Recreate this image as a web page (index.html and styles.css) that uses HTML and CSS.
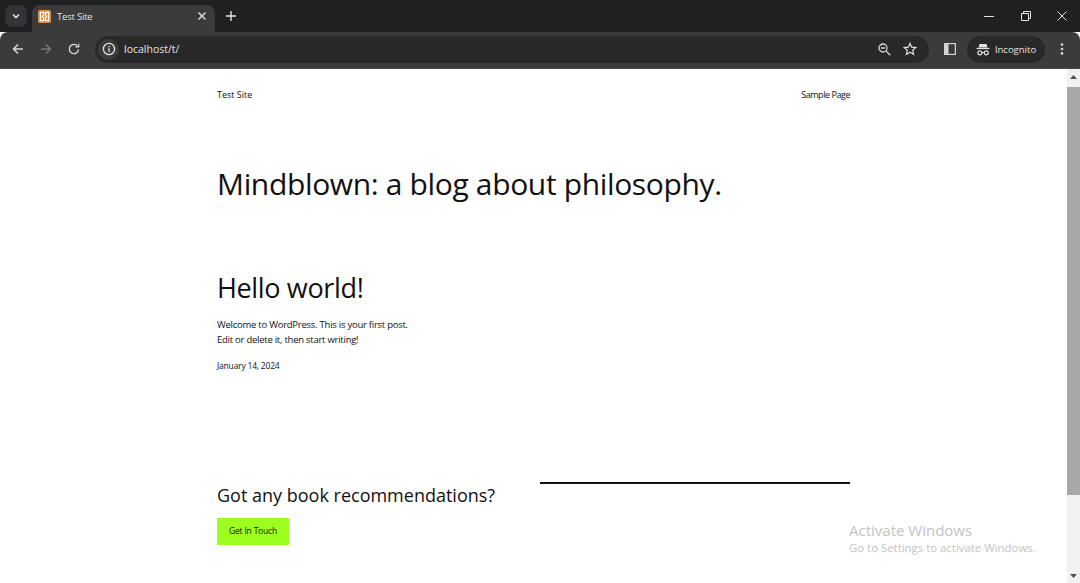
FILE: index.html
```html
<!DOCTYPE html>
<html lang="en">
<head>
    <meta charset="UTF-8">
    <meta name="viewport" content="width=device-width, initial-scale=1.0">
    <title>Test Site</title>
    <link rel="stylesheet" href="styles.css">
</head>
<body>
    <div class="tabstrip">
        <div class="tabSearch">
            <svg width="10" height="10" viewBox="0 0 10 10"><path d="M2 3.5 5 6.5 8 3.5" fill="none" stroke="#e3e3e3" stroke-width="1.6"/></svg>
        </div>
        <div class="tab">
            <svg class="favicon" width="13" height="13" viewBox="0 0 14 14">
                <rect width="14" height="14" rx="2" fill="#e08a3c"/>
                <path d="M2.6 2.6h3.4v2.6L4.8 7 6 8.8v2.6H2.6zM11.4 2.6H8v2.6L9.2 7 8 8.8v2.6h3.4z" fill="none" stroke="#fff" stroke-width="1.4"/>
            </svg>
            <span class="tabTitle">Test Site</span>
            <svg class="tabClose" width="10" height="10" viewBox="0 0 10 10"><path d="M1.5 1.5 8.5 8.5M8.5 1.5 1.5 8.5" stroke="#e3e3e3" stroke-width="1.4"/></svg>
        </div>
        <svg class="newTab" width="10" height="10" viewBox="0 0 10 10"><path d="M5 0V10M0 5H10" stroke="#e3e3e3" stroke-width="1.4"/></svg>
        <div class="windowBtns">
            <svg width="10" height="10" viewBox="0 0 10 10"><path d="M0 5.5H10" stroke="#e3e3e3" stroke-width="1"/></svg>
            <svg width="10" height="10" viewBox="0 0 10 10"><path d="M.5 2.5h7v7h-7zM2.5 2.5V.5h7v7h-2" fill="none" stroke="#e3e3e3" stroke-width="1"/></svg>
            <svg width="10" height="10" viewBox="0 0 10 10"><path d="M.5.5 9.5 9.5M9.5.5 .5 9.5" stroke="#e3e3e3" stroke-width="1"/></svg>
        </div>
    </div>
    <div class="toolbar">
        <svg class="navIcon" width="12" height="12" viewBox="0 0 12 12"><path d="M11 6H1.5M6 1.5 1.5 6 6 10.5" fill="none" stroke="#d5d5d5" stroke-width="1.5"/></svg>
        <svg class="navIcon" width="12" height="12" viewBox="0 0 12 12"><path d="M1 6h9.5M6 1.5 10.5 6 6 10.5" fill="none" stroke="#75787b" stroke-width="1.5"/></svg>
        <svg class="navIcon" width="12" height="12" viewBox="0 0 12 12"><path d="M10.5 6.5A4.6 4.6 0 1 1 9 2.6M10.6 .8V3.8H7.6" fill="none" stroke="#d5d5d5" stroke-width="1.4"/></svg>
        <div class="omnibox">
            <div class="infoChip">
                <svg width="14" height="14" viewBox="0 0 14 14"><circle cx="7" cy="7" r="5.6" fill="none" stroke="#e3e3e3" stroke-width="1.3"/><path d="M7 6.2V10M7 4V5.2" stroke="#e3e3e3" stroke-width="1.3"/></svg>
            </div>
            <span class="url">localhost/t/</span>
            <svg class="zoomIcon" width="13" height="13" viewBox="0 0 13 13"><circle cx="5" cy="5" r="4" fill="none" stroke="#d5d5d5" stroke-width="1.3"/><path d="M3 5H7M8 8 12.3 12.3" stroke="#d5d5d5" stroke-width="1.3"/></svg>
            <svg class="starIcon" width="14" height="14" viewBox="0 0 14 14"><path d="M7 1.4 8.7 5.2 12.8 5.6 9.7 8.3 10.6 12.4 7 10.3 3.4 12.4 4.3 8.3 1.2 5.6 5.3 5.2Z" fill="none" stroke="#e3e3e3" stroke-width="1.2"/></svg>
        </div>
        <svg class="sideIcon" width="12" height="12" viewBox="0 0 12 12"><rect x=".6" y=".6" width="10.8" height="10.8" fill="none" stroke="#d5d5d5" stroke-width="1.2"/><rect x="1" y="1" width="3.5" height="10" fill="#d5d5d5"/></svg>
        <div class="incognito">
            <svg width="14" height="13" viewBox="0 0 14 13"><path d="M3.5 1h7l1 3.5h-9z" fill="#e3e3e3"/><path d="M0.5 5.5h13" fill="none" stroke="#e3e3e3" stroke-width="1.2"/><circle cx="3.8" cy="9.8" r="2" fill="none" stroke="#e3e3e3" stroke-width="1.2"/><circle cx="10.2" cy="9.8" r="2" fill="none" stroke="#e3e3e3" stroke-width="1.2"/><path d="M5.8 9.5h2.4" stroke="#e3e3e3" stroke-width="1"/></svg>
            <span>Incognito</span>
        </div>
        <svg class="menuIcon" width="4" height="12" viewBox="0 0 4 12"><circle cx="2" cy="1.6" r="1.3" fill="#d5d5d5"/><circle cx="2" cy="6" r="1.3" fill="#d5d5d5"/><circle cx="2" cy="10.4" r="1.3" fill="#d5d5d5"/></svg>
    </div>
    <div class="viewport">
        <div class="page">
            <header class="siteHeader">
                <a class="siteName">Test Site</a>
                <a class="navLink">Sample Page</a>
            </header>
            <h1 class="blogTitle">Mindblown: a blog about philosophy.</h1>
            <h2 class="postTitle">Hello world!</h2>
            <p class="postText">Welcome to WordPress. This is your first post.<br>Edit or delete it, then start writing!</p>
            <p class="postDate">January 14, 2024</p>
            <div class="cta">
                <div class="ctaLeft">
                    <h3 class="ctaTitle">Got any book recommendations?</h3>
                    <a class="ctaBtn">Get In Touch</a>
                </div>
                <div class="ctaRule"></div>
            </div>
        </div>
        <div class="scrollbar">
            <svg width="7" height="4" viewBox="0 0 7 4"><path d="M3.5 0 7 4H0Z" fill="#505050"/></svg>
            <div class="scrollThumb"></div>
            <svg width="7" height="4" viewBox="0 0 7 4"><path d="M0 0H7L3.5 4Z" fill="#505050"/></svg>
        </div>
        <div class="activate">
            <div class="activateTitle">Activate Windows</div>
            <div class="activateSub">Go to Settings to activate Windows.</div>
        </div>
    </div>
</body>
</html>
```

FILE: styles.css
```css
* {
    box-sizing: border-box;
}
html, body {
    height: 100%;
}
body {
    margin: 0;
    display: flex;
    flex-direction: column;
    overflow: hidden;
    background: #fff;
    font-family: "Open Sans", "Noto Sans", sans-serif;
    color: #111;
}
h1, h2, h3, p {
    margin: 0;
    font-weight: 400;
}

/* browser chrome */
.tabstrip {
    height: 32px;
    flex: none;
    display: flex;
    align-items: flex-end;
    background: #1f2022;
    padding-left: 5px;
}
.tabSearch {
    width: 22px;
    height: 22px;
    margin-bottom: 5px;
    border-radius: 7px;
    background: #333436;
    display: flex;
    align-items: center;
    justify-content: center;
}
.tab {
    width: 183px;
    height: 27px;
    margin-left: 5px;
    padding: 0 8px 5px 6px;
    border-radius: 8px 8px 0 0;
    background: #3b3b3b;
    display: flex;
    align-items: center;
}
.tabTitle {
    flex: 1;
    margin-left: 6px;
    font-size: 9.5px;
    letter-spacing: -0.2px;
    color: #e3e3e3;
}
.newTab {
    margin: 0 0 11px 11px;
}
.windowBtns {
    margin-left: auto;
    margin-bottom: 11px;
    padding-right: 13px;
    display: flex;
    gap: 26px;
}
.windowBtns svg:first-child {
    margin-right: 1px;
}
.toolbar {
    height: 37px;
    flex: none;
    display: flex;
    align-items: center;
    background: #3b3b3b;
    border-radius: 8px 8px 0 0;
    padding: 0 0 2px 12px;
    border-bottom: 1px solid #4a4a4a;
}
.navIcon {
    margin-right: 16px;
}
.omnibox {
    width: 834px;
    height: 27px;
    margin-left: -1px;
    padding: 0 12px 0 3px;
    border-radius: 14px;
    background: #282828;
    display: flex;
    align-items: center;
}
.infoChip {
    width: 21px;
    height: 21px;
    border-radius: 50%;
    background: #3b3b3b;
    display: flex;
    align-items: center;
    justify-content: center;
}
.url {
    flex: 1;
    margin-left: 5px;
    font-size: 10.5px;
    color: #e3e3e3;
}
.zoomIcon {
    margin-right: 12px;
}
.sideIcon {
    margin-left: 15px;
}
.incognito {
    width: 78px;
    height: 27px;
    margin-left: 11px;
    border-radius: 14px;
    background: #282828;
    display: flex;
    align-items: center;
    justify-content: center;
    gap: 5px;
    font-size: 9.5px;
    color: #e3e3e3;
}
.menuIcon {
    margin-left: 15px;
}

/* page */
.viewport {
    flex: 1;
    min-height: 0;
    position: relative;
    display: flex;
    overflow: hidden;
}
.page {
    flex: 1;
    padding: 19px 217px 0 217px;
}
.siteHeader {
    display: flex;
    justify-content: space-between;
    font-size: 9px;
    line-height: 13px;
}
.navLink {
    letter-spacing: -0.45px;
}
.blogTitle {
    margin-top: 61px;
    font-size: 30px;
    letter-spacing: -0.35px;
    line-height: 44px;
}
.postTitle {
    margin-top: 63px;
    font-size: 27px;
    letter-spacing: -0.35px;
    line-height: 38px;
}
.postText {
    margin-top: 10px;
    font-size: 9.5px;
    letter-spacing: -0.25px;
    line-height: 15px;
}
.postDate {
    margin-top: 13px;
    font-size: 8.5px;
    letter-spacing: -0.2px;
    line-height: 12px;
}
.cta {
    margin-top: 110px;
    display: flex;
    align-items: flex-start;
}
.ctaLeft {
    width: 323px;
}
.ctaTitle {
    font-size: 18px;
    line-height: 26px;
}
.ctaBtn {
    display: block;
    width: 72px;
    height: 27px;
    margin-top: 10px;
    background: #9dff20;
    font-size: 8.5px;
    letter-spacing: -0.2px;
    line-height: 26px;
    text-align: center;
}
.ctaRule {
    flex: 1;
    height: 2px;
    background: #111;
}
.scrollbar {
    width: 13px;
    flex: none;
    background: #f1f1f1;
    display: flex;
    flex-direction: column;
    align-items: center;
    padding: 6px 0 5px;
}
.scrollThumb {
    width: 100%;
    height: 408px;
    margin-top: 8px;
    background: #a8a8a8;
}
.scrollThumb + svg {
    margin-top: auto;
}
.activate {
    position: absolute;
    left: 849px;
    top: 451px;
    color: #c4c4c4;
}
.activateTitle {
    font-size: 15px;
    line-height: 20px;
}
.activateSub {
    font-size: 11.4px;
    line-height: 16px;
}
```
